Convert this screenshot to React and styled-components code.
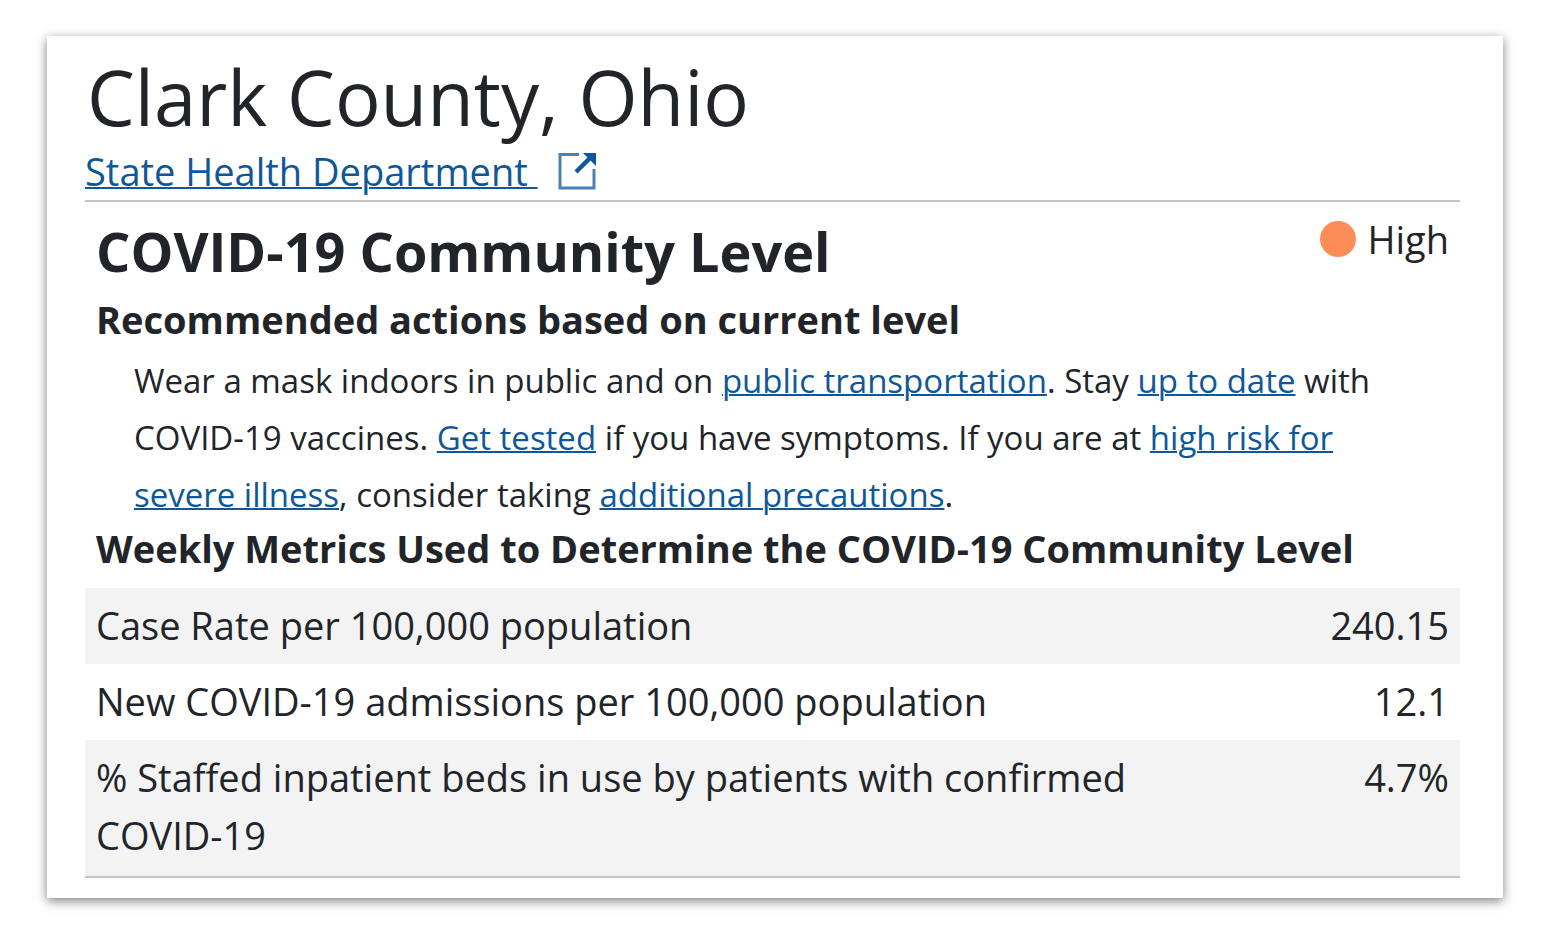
import React from 'react';
import styled, { createGlobalStyle } from 'styled-components';

const COLORS = {
  text: '#212529',
  link: '#0f5798',
  line: '#c4c4c4',
  stripe: '#f3f3f3',
  high: '#fc8d59',
};

const GlobalStyle = createGlobalStyle`
  * {
    box-sizing: border-box;
  }
  body {
    margin: 0;
    background: white;
    color: ${COLORS.text};
    font-family: 'Open Sans', 'Noto Sans', sans-serif;
  }
`;

const Card = styled.main`
  margin: 36px 47px 46px;
  padding: 18px 43px 20px 38px;
  background: white;
  box-shadow: 0 3px 10px rgba(0, 0, 0, 0.5);
`;

const Title = styled.h1`
  margin: 0;
  padding-left: 2px;
  font-size: 76px;
  line-height: 86px;
  font-weight: 400;
`;

const Link = styled.a`
  color: ${COLORS.link};
  text-decoration: underline;
  text-decoration-thickness: 2px;
`;

const Department = styled.div`
  display: flex;
  align-items: center;
  gap: 20px;
  height: 60px;
  padding-top: 2px;
  font-size: 38px;
  white-space: pre;
`;

const Panel = styled.section`
  border-top: 2px solid ${COLORS.line};
`;

const PanelHeader = styled.div`
  display: flex;
  justify-content: space-between;
  padding: 8px 11px 0;
`;

const PanelTitle = styled.h2`
  margin: 0;
  padding-top: 8px;
  font-size: 54px;
  line-height: 66px;
`;

const Level = styled.div`
  display: flex;
  align-items: center;
  gap: 11px;
  height: 58px;
  font-size: 38px;
`;

const Dot = styled.span`
  width: 36px;
  height: 36px;
  border-radius: 50%;
  background: ${COLORS.high};
`;

const SubTitle = styled.h3`
  margin: 0;
  padding: ${({ $tight }) => ($tight ? '0 11px 15px' : '10px 11px 8px')};
  font-size: 38px;
  line-height: 50px;
`;

const Advice = styled.p`
  margin: 0;
  padding: 0 49px;
  font-size: 33px;
  line-height: 57px;
`;

const Metrics = styled.table`
  width: 100%;
  border-spacing: 0;
  border-bottom: 2px solid ${COLORS.line};
  font-size: 38px;
  line-height: 58px;
`;

const Row = styled.tr`
  background: ${({ $striped }) => ($striped ? COLORS.stripe : 'white')};

  &:last-child > * {
    padding-bottom: 12px;
  }
`;

const Name = styled.th`
  width: 80%;
  padding: 8px 11px 10px;
  font-weight: 400;
  text-align: left;
`;

const Value = styled.td`
  padding: 8px 11px 10px;
  text-align: right;
  vertical-align: top;
`;

const metrics = [
  { name: 'Case Rate per 100,000 population', value: '240.15' },
  { name: 'New COVID-19 admissions per 100,000 population', value: '12.1' },
  { name: '% Staffed inpatient beds in use by patients with confirmed COVID-19', value: '4.7%' },
];

function ExternalIcon() {
  return (
    <svg width="38" height="38" viewBox="0 0 38 38" fill="none" stroke={COLORS.link} aria-hidden="true">
      <path d="M21 2.5H2V36H36V17" strokeWidth="3" opacity="0.75" />
      <path d="M18 20L32 6" strokeWidth="4.5" />
      <path d="M25 1H38V14Z" fill={COLORS.link} stroke="none" />
    </svg>
  );
}

function App() {
  return (
    <>
      <GlobalStyle />
      <Card>
        <Title>Clark County, Ohio</Title>
        <Department>
          <Link href="#health-department">{'State Health Department '}</Link>
          <ExternalIcon />
        </Department>
        <Panel>
          <PanelHeader>
            <PanelTitle>COVID-19 Community Level</PanelTitle>
            <Level>
              <Dot />
              High
            </Level>
          </PanelHeader>
          <SubTitle>Recommended actions based on current level</SubTitle>
          <Advice>
            Wear a mask indoors in public and on <Link href="#transportation">public transportation</Link>. Stay{' '}
            <Link href="#vaccines">up to date</Link> with COVID-19 vaccines. <Link href="#testing">Get tested</Link> if
            you have symptoms. If you are at <Link href="#risk">high risk for severe illness</Link>, consider taking{' '}
            <Link href="#precautions">additional precautions</Link>.
          </Advice>
          <SubTitle id="metrics-title" $tight>
            Weekly Metrics Used to Determine the COVID-19 Community Level
          </SubTitle>
          <Metrics aria-labelledby="metrics-title">
            <tbody>
              {metrics.map((metric, index) => (
                <Row key={metric.name} $striped={index % 2 === 0}>
                  <Name scope="row">{metric.name}</Name>
                  <Value>{metric.value}</Value>
                </Row>
              ))}
            </tbody>
          </Metrics>
        </Panel>
      </Card>
    </>
  );
}

export default App;
